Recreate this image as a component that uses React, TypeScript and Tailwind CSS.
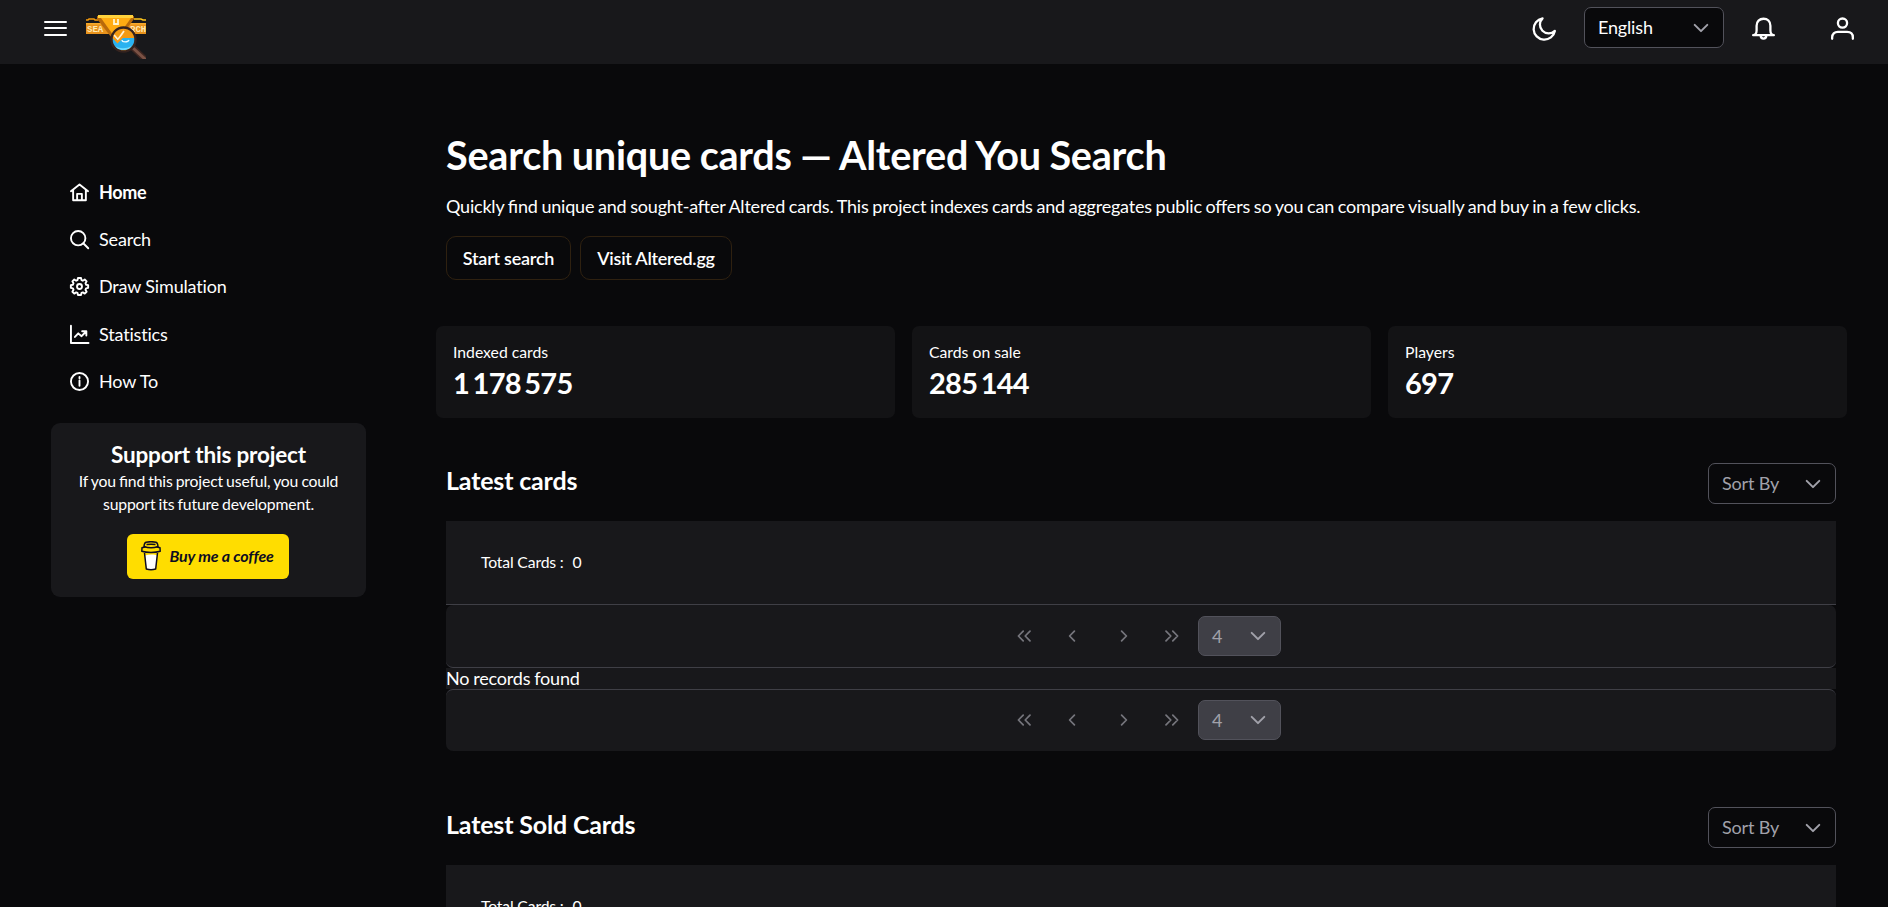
import type { ReactNode } from "react";

const NAV_ITEMS = [
  { label: "Home", icon: "home", active: true },
  { label: "Search", icon: "search" },
  { label: "Draw Simulation", icon: "cog" },
  { label: "Statistics", icon: "chart" },
  { label: "How To", icon: "info" },
];

const STATS = [
  { label: "Indexed cards", groups: ["1", "178", "575"] },
  { label: "Cards on sale", groups: ["285", "144"] },
  { label: "Players", groups: ["697"] },
];

const ICONS: Record<string, ReactNode> = {
  home: (
    <>
      <path d="M1 8.6 10 1.6l9 7M3.3 7.4v10.8h13.4V7.4" />
      <path d="M7.5 18v-6.6h5V18" />
    </>
  ),
  search: (
    <>
      <circle cx="8.6" cy="8.6" r="7.6" />
      <path d="m14.2 14.2 5 5" />
    </>
  ),
  cog: (
    <>
      <path d="M8.4 1h3.2l.5 2.3 1.4.6 2-1.3 2 2-1.2 2 .6 1.5 2.2.4v3l-2.2.5-.6 1.5 1.2 2-2 2-2-1.3-1.4.6-.5 2.2H8.4l-.5-2.2-1.4-.6-2 1.3-2-2 1.2-2-.6-1.5L.9 11.5v-3l2.2-.4.6-1.5-1.2-2 2-2 2 1.3 1.4-.6z" />
      <circle cx="10" cy="10" r="2.6" />
    </>
  ),
  chart: (
    <>
      <path d="M1 .8V19h18.5" />
      <path d="m5.2 12.6 3.5-3.8 3.5 3 5-5.2M12.8 6.6h4.400V11" />
    </>
  ),
  info: (
    <>
      <circle cx="10" cy="10" r="9" />
      <path d="M10 9v5.600M10 5.300v1.200" />
    </>
  ),
  moon: <path d="M8.3 1.200A9.300 9.300 0 1 0 19 12.100 6.900 6.900 0 0 1 8.300 1.200Z" />,
  bell: (
    <>
      <path d="M1 15.800c1.700 0 3-1.700 3-4V7.600C4 3.900 6.500 1.500 10 1.500s6 2.400 6 6.100v4.200c0 2.300 1.300 4 3 4z" />
      <path d="M7.500 16c.1 1.700 1.100 2.800 2.500 2.800s2.400-1.100 2.500-2.800" />
    </>
  ),
  user: (
    <>
      <circle cx="10" cy="5.300" r="4" />
      <path d="M1 19v-1.200c0-3 2-4.800 5-4.800h8c3 0 5 1.800 5 4.800V19" />
    </>
  ),
  down: <path d="m3 6.500 7 7 7-7" />,
  first: <path d="m9 4-6 6 6 6M17.500 4l-6 6 6 6" />,
  prev: <path d="m13 4-6 6 6 6" />,
  next: <path d="m7 4 6 6-6 6" />,
  last: <path d="m2.500 4 6 6-6 6M11 4l6 6-6 6" />,
};

function Icon({ name, className, stroke = 2 }: { name: string; className: string; stroke?: number }) {
  return (
    <svg
      viewBox="0 0 20 20"
      fill="none"
      stroke="currentColor"
      strokeWidth={stroke}
      strokeLinecap="round"
      strokeLinejoin="round"
      className={`shrink-0 overflow-visible ${className}`}
    >
      {ICONS[name]}
    </svg>
  );
}

function Logo() {
  return (
    <svg viewBox="0 0 60 44" className="h-11 w-15">
      <path d="M0 5h2l1-1h5l1 1h3" stroke="#f59a0c" strokeWidth="1.500" fill="none" />
      <path d="M48 4h7l2 1h3" stroke="#ffc51c" strokeWidth="1.500" fill="none" />
      <path d="M0 8h60v11H0z" fill="#e8921c" />
      <path d="M0 8h60v1.500H0z" fill="#f7ab2c" />
      <g fontFamily="'Liberation Mono'" fontWeight="700" fontSize="9" letterSpacing="0" fill="#ffe7b0">
        <text x="1" y="17">SEA</text>
        <text x="44" y="17">RCH</text>
      </g>
      <path d="M11 1h37v3L31 27h-2L11 4z" fill="#b96a0a" />
      <path d="M12 0h35v3H12z" fill="#ffd23c" />
      <path d="M15 3h30L30 24z" fill="#ffab12" />
      <path d="M28 4v5h4V4" stroke="#fff3d0" strokeWidth="1.800" fill="none" />
      <path d="m46 32 14 13" stroke="#3c2520" strokeWidth="6" />
      <path d="m47 33 13 12" stroke="#7a5144" strokeWidth="3" />
      <circle cx="37.500" cy="24.500" r="11.500" fill="#f39a14" />
      <path d="M26 23h23a11.500 11.500 0 0 1-23 1.500z" fill="#2ab2f0" />
      <path d="M29 31c4 3 12 3 16 0-1 3-4 4-7.500 4S30 34 29 31z" fill="#6fdcff" />
      <path d="m28 20 4 4.500 6-8.500" stroke="#fff0d0" strokeWidth="1.800" fill="none" />
      <path d="m27 22 4.500 5 5-5" stroke="#ff9a10" strokeWidth="2" fill="none" />
      <path d="M36 25c0 2.500 6 2.500 7 0" stroke="#e8faff" strokeWidth="1.300" fill="none" />
      <circle cx="37.500" cy="24.500" r="12" fill="none" stroke="#35231f" strokeWidth="2.400" />
    </svg>
  );
}

function CoffeeCup() {
  return (
    <svg viewBox="0 0 20 30" className="h-[30px] w-5" stroke="#0d0c22" strokeWidth="1.500" strokeLinejoin="round">
      <path d="m4 14.500 1.500 13c2.900.8 6.100.8 9 0L16 14.500c-3-1.600-8-1.300-12 0z" fill="#fff" stroke="none" />
      <path d="m3.500 12 1.800 16c3 .9 6.400.9 9.400 0l1.800-16" fill="none" />
      <path d="M1 6.800C5 5.200 15 5.200 19 6.800l.2 3.400c-5 1.600-13.400 1.600-18.400 0z" fill="#ffdd00" />
      <path d="M3 5.500C3.200 3 4 1.500 5 1.200c3-.6 7-.6 10 0 1 .3 1.800 1.800 2 4.300-4 1.500-10 1.500-14 0z" fill="#ffdd00" />
      <path d="M5.500 3.600c3-.5 6-.5 9 0" fill="none" />
    </svg>
  );
}

function Topbar() {
  return (
    <header className="flex h-16 items-center bg-[#18181b]">
      <button className="mb-2 ml-11 flex w-[23px] flex-col gap-[4.500px]">
        <span className="h-0.5 rounded bg-white" />
        <span className="h-0.5 rounded bg-white" />
        <span className="h-0.5 rounded bg-white" />
      </button>
      <div className="ml-[19px] mt-2.5">
        <Logo />
      </div>
      <Icon name="moon" className="mb-2 ml-auto size-[23px]" />
      <div className="mb-[9px] ml-7 flex h-[41px] w-[140px] items-center justify-between rounded-[7px] border border-[#52525b] bg-[#09090b] px-[13px]">
        <span>English</span>
        <Icon name="down" className="size-[18px] text-[#a1a1aa]" stroke={2.2} />
      </div>
      <Icon name="bell" className="mb-2 ml-7 size-[23px]" />
      <Icon name="user" className="mb-2 ml-14 mr-[34px] size-[23px]" />
    </header>
  );
}

function Sidebar() {
  return (
    <aside className="ml-[51px] w-[315px] shrink-0 pt-[105px]">
      <nav className="flex flex-col pl-[19px]">
        {NAV_ITEMS.map((item) => (
          <a key={item.label} className="flex h-[47.200px] items-center gap-2.5">
            <Icon name={item.icon} className="size-[19px]" />
            <span className={item.active ? "font-bold tracking-[-0.3px]" : ""}>{item.label}</span>
          </a>
        ))}
      </nav>
      <div className="mt-[18px] flex h-[174px] flex-col items-center rounded-[9px] bg-[#18181b] pt-[18px] text-center">
        <h3 className="text-[22.500px] font-bold leading-[27px]">Support this project</h3>
        <p className="mt-px w-[280px] text-[15.750px] leading-[23px] [font-feature-settings:'liga'] [word-spacing:-0.7px]">
          If you find this project useful, you could support its future development.
        </p>
        <button className="mr-0.5 mt-[19px] flex h-[45px] w-[162px] items-center gap-[9px] rounded-md bg-[#ffdd00] pl-[14px] text-[#0d0c22]">
          <CoffeeCup />
          <span className="whitespace-nowrap text-[16px] font-bold italic tracking-[-0.15px]">Buy me a coffee</span>
        </button>
      </div>
    </aside>
  );
}

function Paginator() {
  return (
    <div className="flex h-[50px] items-center text-[#75757c]">
      <Icon name="first" className="ml-[570px] size-4" stroke={2.2} />
      <Icon name="prev" className="ml-8 size-4" stroke={2.2} />
      <Icon name="next" className="ml-9 size-4" stroke={2.2} />
      <Icon name="last" className="ml-8 size-4" stroke={2.2} />
      <div className="ml-[18px] flex h-10 w-[83px] items-center justify-between rounded-[7px] border border-[#52525b] bg-[#3f3f46] px-[13px] text-[#a1a1aa]">
        <span>4</span>
        <Icon name="down" className="size-[18px]" stroke={2.2} />
      </div>
    </div>
  );
}

function CardSection({ title }: { title: string }) {
  return (
    <section className="mb-14 w-[1390px]">
      <div className="flex h-[41px] items-center justify-between">
        <h2 className="mb-1.5 text-[25px] font-bold">{title}</h2>
        <div className="flex h-[41px] w-32 items-center justify-between rounded-[7px] border border-[#52525b] px-[13px] text-[#a1a1aa]">
          <span>Sort By</span>
          <Icon name="down" className="size-[18px]" stroke={2.2} />
        </div>
      </div>
      <div className="mt-[17px]">
        <div className="flex h-[84px] items-center gap-[9px] border-b border-[#3f3f46] bg-[#18181b] pb-0.5 pl-[35px] text-[15.750px]">
          <span>Total Cards :</span>
          <span>0</span>
        </div>
        <div className="h-[63px] rounded-[7px] border-b border-[#3f3f46] bg-[#18181b] pt-1.5">
          <Paginator />
        </div>
        <div className="h-[21px] bg-[#18181b] leading-[21px] [word-spacing:-0.6px]">No records found</div>
        <div className="h-[62px] rounded-[7px] border-t border-[#3f3f46] bg-[#18181b] pt-[5px]">
          <Paginator />
        </div>
      </div>
    </section>
  );
}

export default function App() {
  return (
    <div className="h-[907px] overflow-hidden bg-[#09090b] font-['Lato',sans-serif] text-[18px] tracking-[-0.17px] text-white">
      <Topbar />
      <div className="flex">
        <Sidebar />
        <main className="ml-20 pt-[65px]">
          <h1 className="text-[39.600px] font-bold leading-[52px] tracking-[-0.22px] [word-spacing:-0.8px]">
            Search unique cards — Altered You Search
          </h1>
          <p className="mt-3 whitespace-nowrap leading-[27px] tracking-[-0.2px] [font-feature-settings:'liga'] [word-spacing:-0.65px]">
            Quickly find unique and sought-after Altered cards. This project indexes cards and aggregates public offers
            so you can compare visually and buy in a few clicks.
          </p>
          <div className="mt-4 flex gap-[9px] font-semibold tracking-[-0.25px]">
            <button className="h-11 w-[125px] rounded-[10px] border border-[#2f2110]">Start search</button>
            <button className="h-11 w-[152px] rounded-[10px] border border-[#2f2110]">Visit Altered.gg</button>
          </div>
          <div className="-ml-2.5 mt-[46px] grid w-[1410.500px] grid-cols-3 gap-[17.500px]">
            {STATS.map((s) => (
              <div key={s.label} className="h-[92px] rounded-[7px] bg-[#131315] pl-[17px] pt-3.5">
                <div className="text-[15.750px] leading-[23px] tracking-[0]">{s.label}</div>
                <div className="flex gap-[3.500px] text-[29px] font-bold leading-[39px] tracking-[-0.75px]">
                  {s.groups.map((g) => (
                    <span key={g}>{g}</span>
                  ))}
                </div>
              </div>
            ))}
          </div>
          <div className="mt-[45px]">
            <CardSection title="Latest cards" />
            <CardSection title="Latest Sold Cards" />
          </div>
        </main>
      </div>
    </div>
  );
}
